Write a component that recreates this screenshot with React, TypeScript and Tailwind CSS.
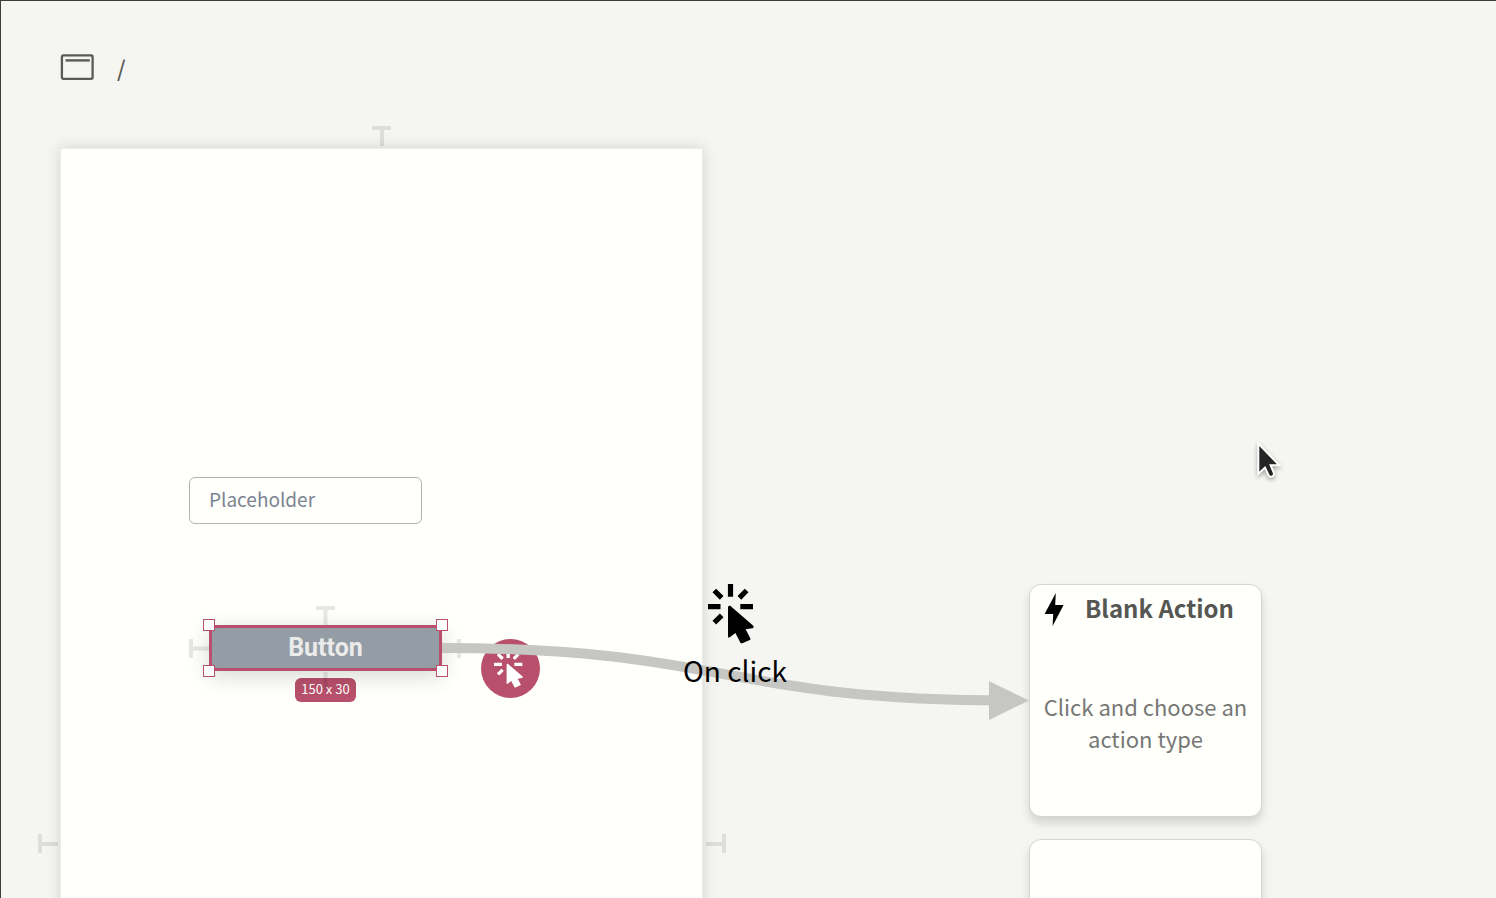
import type { ReactNode } from "react";

function ClickIcon({ className }: { className: string }) {
  return (
    <svg viewBox="0 0 46 60" className={className} aria-hidden="true">
      <g stroke="currentColor" strokeWidth="5.2" fill="none">
        <path d="M22.5 0V12.7M0 22.7H12.5M32.3 22.7H45M6.3 6.5L13.7 13.8M38.6 6.5L31.4 13.8M6.3 38.6L13.7 31.4" />
      </g>
      <path
        d="M20 23.5C20 22 21.6 21.2 22.8 22.3L45 41.6C46.3 43 45.6 44 44.1 44.3L37.6 45.3L42.3 54.2Q42.8 55.3 41.8 55.9L34.3 59.2Q33 59.7 32.3 58.5L27.4 49L21.8 53.3Q20 54.3 20 52.3Z"
        fill="currentColor"
      />
    </svg>
  );
}

function Handle({ className }: { className: string }) {
  return <span className={`absolute size-3 border border-[#b8506b] bg-white ${className}`} />;
}

function Node({ children }: { children?: ReactNode }) {
  return (
    <article className="h-[233px] w-full shrink-0 rounded-xl border border-[#d5d6d1] bg-[#fffffc] shadow-[0_6px_10px_rgba(0,0,0,0.14)]">
      {children}
    </article>
  );
}

export default function App() {
  return (
    <main className="relative flex h-screen flex-col overflow-hidden border-t border-l border-[#3c3c3a] bg-[#f5f5f2] font-['Noto_Sans_CJK_SC','Noto_Sans',sans-serif]">
      <nav
        aria-label="Breadcrumb"
        className="flex h-[147px] shrink-0 items-center gap-[23px] px-[59px] pb-4 text-[#5a5b57]"
      >
        <svg width="34" height="26" viewBox="0 0 34 26" fill="none" stroke="currentColor" aria-hidden="true">
          <rect x="1.9" y="1.4" width="30.7" height="23.4" rx="1.5" strokeWidth="2.3" />
          <path d="M5.5 6.4H29.8" strokeWidth="2.4" />
        </svg>
        <span className="text-[22px] leading-8 font-medium">/</span>
      </nav>

      <div className="flex min-h-0 flex-1 items-start pl-[59px]">
        <section
          aria-label="Page"
          className="h-[800px] w-[643px] shrink-0 border border-[#ebece8] bg-[#fffffc] pt-[328px] pl-[128px] shadow-[0_0_14px_rgba(0,0,0,0.14)]"
        >
          <input
            aria-label="Placeholder"
            placeholder="Placeholder"
            className="block h-[47px] w-[233px] rounded-md border border-[#b2b5af] bg-[#fffffc] px-[19px] pb-1 text-[19px] outline-none placeholder:text-[#7c8491]"
          />

          <div className="relative z-10 mt-[101px] ml-5 flex w-[233px] flex-col items-center gap-[7px]">
            <button
              type="button"
              className="relative h-[46px] w-full border-[3px] border-[#b8506b] bg-[#949ca6] font-[Roboto,sans-serif] text-[25px] leading-8 font-bold text-[#ebebe9] shadow-[0_5px_22px_rgba(0,0,0,0.16)]"
            >
              Button
              <Handle className="-top-[9px] -left-[9px]" />
              <Handle className="-top-[9px] -right-[9px]" />
              <Handle className="-bottom-[9px] -left-[9px]" />
              <Handle className="-right-[9px] -bottom-[9px]" />
            </button>
            <span className="flex h-6 w-[61px] items-center justify-center rounded-md bg-[#b8506b] pb-[2px] text-[13px] whitespace-nowrap text-white">
              150 x 30
            </span>
            <button
              type="button"
              aria-label="Add click action"
              className="absolute top-[14px] left-[272px] flex size-[59px] items-center justify-center rounded-full bg-[#b8506b] pr-1 text-white"
            >
              <ClickIcon className="h-[38px] w-[29px]" />
            </button>
          </div>
        </section>

        <section aria-label="Actions" className="mt-[436px] ml-[326px] flex w-[233px] shrink-0 flex-col gap-[22px]">
          <Node>
            <header className="flex h-12 items-center gap-[21px] pl-[14px]">
              <svg width="20" height="34" viewBox="0 0 20 34" aria-hidden="true">
                <path d="M11.8 1L0.6 22H9.2L8.6 34L19.6 13H11.2Z" />
              </svg>
              <h2 className="pb-[2px] text-2xl font-bold whitespace-nowrap text-[#565753]">Blank Action</h2>
            </header>
            <p className="mt-[57px] text-center text-[22px] leading-8 text-[#767774]">
              Click and choose an action type
            </p>
          </Node>
          <Node />
        </section>
      </div>

      <svg
        className="absolute top-0 left-0"
        width="1495"
        height="897"
        viewBox="1 1 1495 897"
        fill="none"
        aria-hidden="true"
      >
        <g stroke="#000" strokeOpacity="0.095" strokeWidth="4">
          <path d="M372 128H391M382 130V146" />
          <path d="M40 834V853M42 844H58" />
          <path d="M724 834V853M722 844H706" />
          <path d="M316 608H335M325.5 610V626" />
          <path d="M191 639V658M193 648.5H209" />
          <path d="M459 639V658M457 648.5H442" />
        </g>
      </svg>

      <svg
        className="pointer-events-none absolute top-0 left-0 z-20"
        width="1495"
        height="897"
        viewBox="1 1 1495 897"
        fill="none"
        aria-hidden="true"
      >
        <path d="M325.5 672V690" stroke="#000" strokeOpacity="0.095" strokeWidth="4" />
        <path d="M442 648C725 648 725 700.5 1008 700.5" stroke="#c6c7c2" strokeWidth="10" />
        <path d="M989 681L1029 700.5L989 720Z" fill="#c6c7c2" />
      </svg>

      <div className="absolute top-[583px] left-[634px] z-20 flex w-[200px] flex-col items-center text-black">
        <ClickIcon className="mr-2 h-[60px] w-[46px]" />
        <span className="mt-[6px] text-[28px] leading-10">On click</span>
      </div>

      <svg
        className="absolute top-[439px] left-[1255px] drop-shadow-[0_2px_2px_rgba(0,0,0,0.35)]"
        width="26"
        height="42"
        viewBox="0 0 26 42"
        aria-hidden="true"
      >
        <path
          d="M2.3 3.5V34L9 27.6L12.4 35Q13.8 37.6 16.5 36.4Q18.8 35.2 17.6 32.4L14.6 25.2H23.3Z"
          fill="#252525"
          stroke="#fff"
          strokeWidth="2"
        />
      </svg>
    </main>
  );
}
